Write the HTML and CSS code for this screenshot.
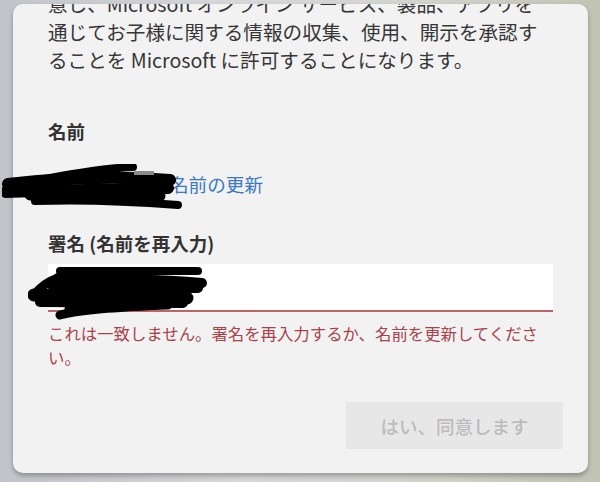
FILE: index.html
```html
<!DOCTYPE html>
<html lang="ja">
<head>
<meta charset="utf-8">
<link rel="stylesheet" href="styles.css">
</head>
<body>
<div class="dialog">
  <div class="clip">
    <p class="intro">意し、Microsoft オンライン サービス、製品、アプリを<br>通じてお子様に関する情報の収集、使用、開示を承認す<br>ることを Microsoft に許可することになります。</p>
  </div>
  <div class="label label-name">名前</div>
  <div class="name-row">
    <span class="name-value"></span>
    <a class="link">名前の更新</a>
    <svg class="scribble scribble-name" width="182" height="46" viewBox="0 0 182 46">
      <g fill="none" stroke="#000" stroke-linecap="round" stroke-linejoin="round">
        <path d="M6,20 C58,14 118,12 168,16" stroke-width="12"/>
        <path d="M4,28 C58,26 118,26 166,24" stroke-width="12"/>
        <path d="M38,16 C78,8 108,4 131,3" stroke-width="8"/>
        <path d="M33,37 C88,35 138,38 176,41" stroke-width="8"/>
        <path d="M28,31 L158,32" stroke-width="11"/>
      </g>
      <path d="M132,9 L152,9" stroke="#8a8a8a" stroke-width="4"/>
    </svg>
  </div>
  <div class="label label-sign">署名 (名前を再入力)</div>
  <div class="field">
    <div class="input"></div>
    <svg class="scribble scribble-input" width="180" height="56" viewBox="0 0 180 56">
      <g fill="none" stroke="#000" stroke-linecap="round" stroke-linejoin="round">
        <path d="M32,7 L170,7" stroke-width="8"/>
        <path d="M30,14 C90,14 150,17 174,19" stroke-width="10"/>
        <path d="M25,23 L170,24" stroke-width="10"/>
        <path d="M6,31 C60,32 120,34 159,34" stroke-width="13"/>
        <path d="M12,38 L155,39" stroke-width="10"/>
        <path d="M32,51 C50,46 80,44 129,41" stroke-width="9"/>
        <path d="M30,14 C18,18 10,26 6,31" stroke-width="9"/>
        <path d="M40,45 C70,44 100,43 140,42" stroke-width="7"/>
      </g>
    </svg>
  </div>
  <p class="error">これは一致しません。署名を再入力するか、名前を更新してください。</p>
  <div class="footer">
    <button class="btn" disabled>はい、同意します</button>
  </div>
</div>
</body>
</html>
```

FILE: styles.css
```css
html, body {
  margin: 0;
  padding: 0;
}
body {
  width: 600px;
  height: 482px;
  box-sizing: border-box;
  padding: 4px 12px 9px 13px;
  background: linear-gradient(to right, #c1c4c9 0%, #d6d8da 40%, #d3d4cc 70%, #c2c3b4 100%);
  font-family: "Noto Sans CJK JP", "Noto Sans", sans-serif;
  overflow: hidden;
}
.dialog {
  height: 469px;
  box-sizing: border-box;
  background: #f2f2f2;
  border-radius: 10px;
  padding: 0 35px;
  display: flex;
  flex-direction: column;
  box-shadow: 0 3px 5px rgba(0, 0, 0, 0.28);
}
.clip {
  overflow: hidden;
  flex: none;
}
.intro {
  margin: -14px 0 0 0;
  font-size: 19.6px;
  line-height: 28px;
  color: #363636;
  white-space: nowrap;
}
.label {
  font-size: 18.5px;
  line-height: 26px;
  font-weight: 700;
  color: #333;
}
.label-name {
  margin-top: 44px;
}
.name-row {
  position: relative;
  margin-top: 27px;
  height: 26px;
  display: flex;
  align-items: center;
}
.name-value {
  width: 122px;
  flex: none;
}
.link {
  font-size: 18.6px;
  line-height: 26px;
  color: #3a78c2;
}
.scribble {
  position: absolute;
}
.scribble-name {
  left: -46px;
  top: -7px;
}
.label-sign {
  margin-top: 33px;
}
.field {
  position: relative;
  margin-top: 8px;
  height: 48px;
}
.input {
  height: 46px;
  background: #fff;
  border-bottom: 2px solid #c2636b;
}
.scribble-input {
  left: -20px;
  top: 0;
}
.error {
  margin: 9px 0 0 0;
  font-size: 16.4px;
  line-height: 24px;
  color: #a9434b;
}
.footer {
  margin-top: auto;
  margin-right: -10px;
  padding-bottom: 24px;
  display: flex;
  justify-content: flex-end;
}
.btn {
  width: 217px;
  height: 47px;
  border: none;
  border-radius: 2px;
  background: #e7e7e7;
  color: #bcbcbc;
  font-family: "Noto Sans CJK JP", "Noto Sans", sans-serif;
  font-size: 18.5px;
  font-weight: 500;
  padding: 0;
}
```
